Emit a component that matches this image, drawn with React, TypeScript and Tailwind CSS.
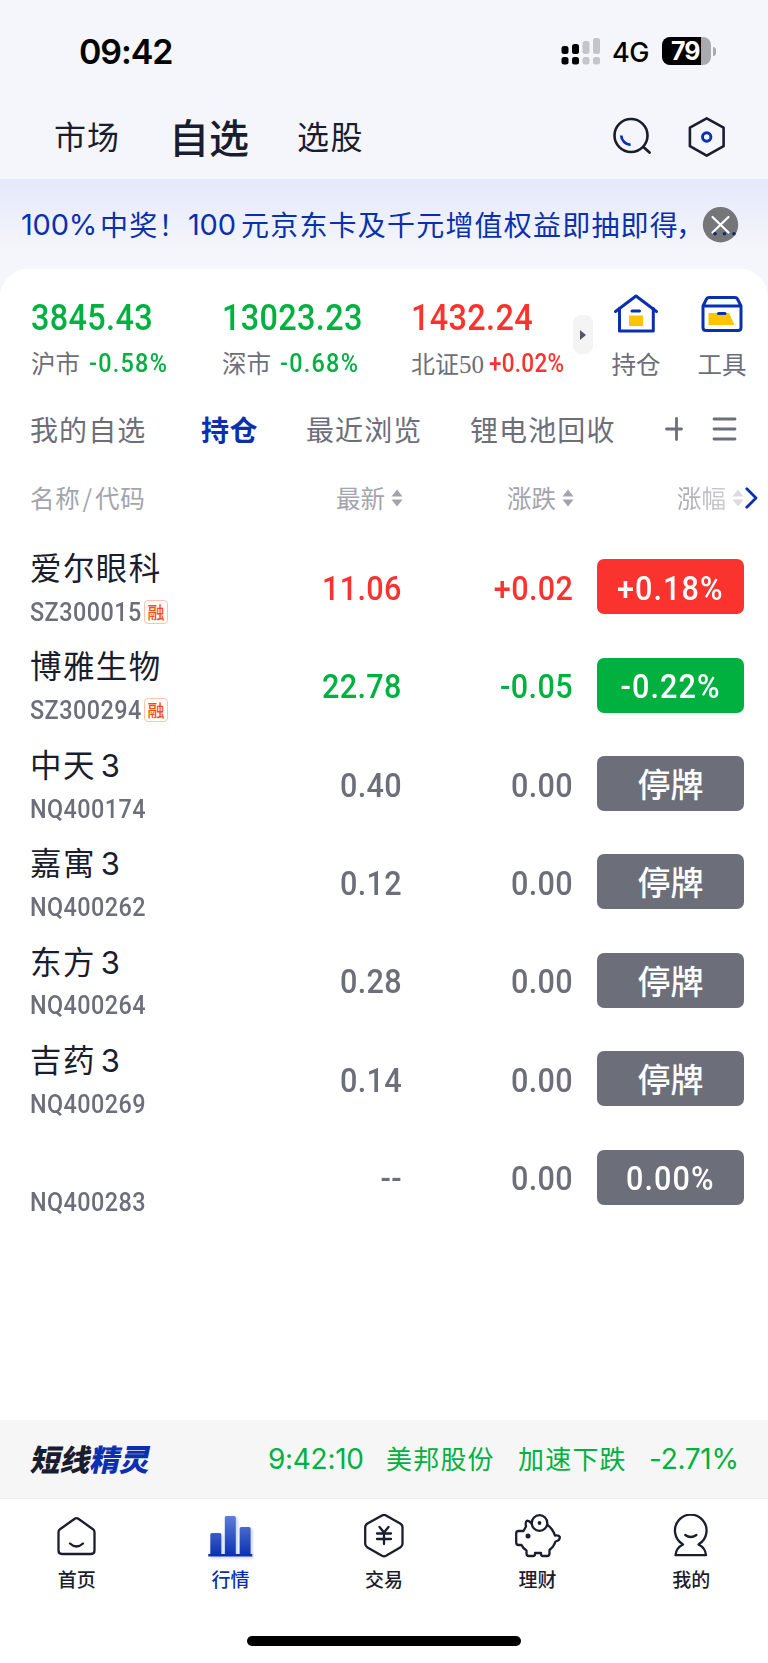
import type { ReactNode } from "react";

type Tone = "up" | "down" | "flat";

const toneText: Record<Tone, string> = {
  up: "text-[#fa332e]",
  down: "text-[#00b140]",
  flat: "text-[#6c6e7a]",
};

const toneBg: Record<Tone, string> = {
  up: "bg-[#fa332e]",
  down: "bg-[#00b140]",
  flat: "bg-[#6c6e7a]",
};

// narrow numerals used for every quote
const DIN = "inline-block scale-x-90 font-['Roboto',sans-serif] font-medium";

const stocks: {
  name: string;
  suffix?: string;
  code: string;
  margin?: boolean;
  price: string;
  change: string;
  badge: string;
  tone: Tone;
}[] = [
  { name: "爱尔眼科", code: "SZ300015", margin: true, price: "11.06", change: "+0.02", badge: "+0.18%", tone: "up" },
  { name: "博雅生物", code: "SZ300294", margin: true, price: "22.78", change: "-0.05", badge: "-0.22%", tone: "down" },
  { name: "中天", suffix: "3", code: "NQ400174", price: "0.40", change: "0.00", badge: "停牌", tone: "flat" },
  { name: "嘉寓", suffix: "3", code: "NQ400262", price: "0.12", change: "0.00", badge: "停牌", tone: "flat" },
  { name: "东方", suffix: "3", code: "NQ400264", price: "0.28", change: "0.00", badge: "停牌", tone: "flat" },
  { name: "吉药", suffix: "3", code: "NQ400269", price: "0.14", change: "0.00", badge: "停牌", tone: "flat" },
  { name: "", code: "NQ400283", price: "--", change: "0.00", badge: "0.00%", tone: "flat" },
];

function StatusBar() {
  return (
    <div className="flex h-[102px] items-center pl-[79px] text-black">
      <span className="w-[481px] pt-[1px] font-['Inter',sans-serif] text-[34px] font-semibold leading-none tracking-[-1.1px]">
        09:42
      </span>
      <svg width="40" height="28" viewBox="0 0 40 28">
        <g fill="#000">
          <rect x="1.5" y="9" width="7" height="8" rx="2.5" />
          <rect x="12" y="7" width="7" height="10" rx="2.5" />
          <rect x="1.5" y="20" width="7" height="7.5" rx="2.5" />
          <rect x="12" y="20" width="7" height="7.5" rx="2.5" />
        </g>
        <g fill="#c4c4c9">
          <rect x="22.5" y="4" width="7" height="13" rx="2.5" />
          <rect x="33" y="1" width="7" height="16" rx="2.5" />
          <rect x="22.5" y="20" width="7" height="7.5" rx="2.5" />
          <rect x="33" y="20" width="7" height="7.5" rx="2.5" />
        </g>
      </svg>
      <span className="ml-[12px] w-[50px] pt-[2px] font-['Inter',sans-serif] text-[27px] font-medium leading-none tracking-[-0.5px]">
        4G
      </span>
      <div className="flex h-[28px] w-[49px] items-center overflow-hidden rounded-[8px] bg-linear-to-r from-black from-80% to-[#a9a9ae] to-80%">
        <span className="pl-[9px] font-['Inter',sans-serif] text-[25px] font-bold leading-none tracking-[-1px] text-white">
          79
        </span>
      </div>
      <div className="ml-[2px] h-[9px] w-[3px] rounded-r-full bg-[#a9a9ae]" />
    </div>
  );
}

function TopTabs() {
  return (
    <div className="flex h-[77px] items-center pb-[8px] pl-[54px] text-[#1a1d2e]">
      <span className="w-[115px] pb-[3px] text-[32px] leading-none tracking-[1px]">市场</span>
      <span className="w-[128px] pb-[2px] text-[40px] font-medium leading-none">自选</span>
      <span className="w-[315px] pb-[3px] text-[32px] leading-none tracking-[1.5px]">选股</span>
      <svg width="40" height="40" viewBox="0 0 40 40" fill="none" strokeLinecap="round">
        <circle cx="19" cy="18.5" r="16.5" stroke="#1a1d2e" strokeWidth="2.6" />
        <path d="M32 30.5L37.5 35.5" stroke="#1a1d2e" strokeWidth="2.8" />
        <path d="M9.2 18.5A10 10 0 0 0 18.6 27.8" stroke="#0a30b0" strokeWidth="2.8" strokeLinecap="butt" />
      </svg>
      <svg className="ml-[35px]" width="40" height="40" viewBox="0 0 40 40" fill="none" strokeLinejoin="round">
        <path d="M19.7 1.3L36.6 10.6V29.2L19.7 38.6L2.9 29.2V10.6Z" stroke="#1a1d2e" strokeWidth="2.6" />
        <circle cx="19.7" cy="20" r="4.2" stroke="#0a30b0" strokeWidth="2.9" />
      </svg>
    </div>
  );
}

function Banner() {
  return (
    <div className="relative h-[117px] bg-linear-to-b from-[#e4e8fa] to-[#f5f6fb] to-60%">
      <div className="flex h-[90px] items-center whitespace-nowrap pl-[21px] text-[28px] leading-none tracking-[1.2px] text-[#0a30b0]">
        <span className="w-[79px] pt-[1px] font-['Inter',sans-serif] text-[29px] tracking-[-0.2px]">100%</span>
        <span className="w-[88px]">中奖！</span>
        <span className="w-[53px] pt-[1px] font-['Inter',sans-serif] text-[29px] tracking-[-0.2px]">100</span>
        <span>
          元京东卡及千元增值权益即抽即得<span className="-ml-[3px]">，</span>
        </span>
      </div>
      <svg className="absolute left-[702px] top-[27px]" width="38" height="38" viewBox="0 0 38 38">
        <circle cx="18.5" cy="18.7" r="17.7" fill="#757679" />
        <path d="M10.5 11L26.5 26.5M26.5 11L10.5 26.5" stroke="#fff" strokeWidth="2.2" strokeLinecap="round" />
        <g fill="#17276b">
          <circle cx="13" cy="27.8" r="1.8" />
          <circle cx="22.5" cy="27.8" r="1.8" />
          <circle cx="32" cy="27.8" r="1.8" />
        </g>
      </svg>
    </div>
  );
}

function IndexCell({
  value,
  label,
  pct,
  tone,
  className,
  pctClass,
}: {
  value: string;
  label: ReactNode;
  pct: string;
  tone: Tone;
  className: string;
  pctClass: string;
}) {
  return (
    <div className={className}>
      <div className="h-[46px] pt-[1px]">
        <span className={`origin-left text-[36px] leading-[46px] tracking-[0.4px] ${DIN} ${toneText[tone]}`}>{value}</span>
      </div>
      <div className="flex h-[46px] items-center whitespace-nowrap text-[24.5px] leading-none text-[#6c6e7a]">
        {label}
        <span className={`origin-left ${DIN} ${toneText[tone]} ${pctClass}`}>{pct}</span>
      </div>
    </div>
  );
}

function Indices() {
  return (
    <div className="flex h-[131px] pl-[31px] pt-[25px]">
      <IndexCell
        className="w-[191px]"
        value="3845.43"
        tone="down"
        pct="-0.58%"
        pctClass="text-[26px] tracking-[1.4px]"
        label={<span className="w-[58px]">沪市</span>}
      />
      <IndexCell
        className="w-[189px]"
        value="13023.23"
        tone="down"
        pct="-0.68%"
        pctClass="text-[26px] tracking-[1.4px]"
        label={<span className="w-[58px]">深市</span>}
      />
      <IndexCell
        className="w-[162px]"
        value="1432.24"
        tone="up"
        pct="+0.02%"
        pctClass="text-[25px] tracking-[0.3px]"
        label={
          <span className="w-[78px] pt-[2px] font-['Liberation_Serif','Noto_Sans_CJK_SC',serif] text-[24px]">
            北证<span className="text-[25px]">50</span>
          </span>
        }
      />
      <div className="mt-[21px] flex h-[39px] w-[20px] items-center justify-center rounded-[8px] bg-[#f4f4f5]">
        <svg width="6" height="10" viewBox="0 0 6 10">
          <path d="M0 0L6 5L0 10Z" fill="#555764" />
        </svg>
      </div>
      <div className="flex w-[86px] flex-col items-center">
        <svg className="ml-[-1px]" width="46" height="40" viewBox="0 0 46 40" fill="none" stroke="#0a30b0" strokeWidth="3" strokeLinecap="round" strokeLinejoin="round">
          <path d="M2.5 17.5L23 2L43.5 17.5" />
          <path d="M6.5 14.5V37H40.3V14.5" />
          <rect x="16" y="21.5" width="14" height="10.5" fill="#ffc400" stroke="none" />
          <path d="M19 17H26.5" />
        </svg>
        <span className="mt-[18px] text-[24.5px] leading-none">持仓</span>
      </div>
      <div className="flex w-[86px] flex-col items-center">
        <svg width="42" height="40" viewBox="0 0 42 40" fill="none" stroke="#0a30b0" strokeWidth="3" strokeLinecap="round" strokeLinejoin="round">
          <path d="M2 12L5.5 5Q6.3 3.5 8 3.5H34Q35.7 3.5 36.5 5L40 12V33.5Q40 36.5 37 36.5H5Q2 36.5 2 33.5ZM2 12H40" />
          <path d="M7.5 19H28L33.5 31H7.5Z" fill="#ffc400" stroke="none" />
          <path d="M17.5 19.5H24" />
        </svg>
        <span className="mt-[18px] text-[24.5px] leading-none">工具</span>
      </div>
    </div>
  );
}

function GroupTabs() {
  return (
    <div className="flex h-[60px] items-center pb-[2px] pl-[30px] text-[28px] leading-none tracking-[1.1px]">
      <span className="w-[171px]">我的自选</span>
      <span className="w-[105px] font-bold text-[#0a30b0] tracking-[0.5px]">持仓</span>
      <span className="w-[164px]">最近浏览</span>
      <span className="w-[195px]">锂电池回收</span>
      <svg width="18" height="24" viewBox="0 0 18 24" stroke="#6c6e7a" strokeWidth="2.8" strokeLinecap="round">
        <path d="M1.5 12H16.5M11.5 1.5V22.5" />
      </svg>
      <svg className="ml-[29px]" width="25" height="24" viewBox="0 0 25 24" stroke="#6c6e7a" strokeWidth="2.8" strokeLinecap="round">
        <path d="M2 2H23M2 12H23M2 22H23" />
      </svg>
    </div>
  );
}

function Sorter() {
  return (
    <svg className="ml-[6px]" width="12" height="18" viewBox="0 0 12 18" fill="currentColor">
      <path d="M6 0.5L11.5 7.5H0.5ZM6 17.5L11.5 10.5H0.5Z" />
    </svg>
  );
}

function TableHead() {
  return (
    <div className="flex h-[77.6px] items-center pb-[2px] pl-[30px] text-[24.5px] leading-none text-[#a3a4ad]">
      <span className="w-[200px] tracking-[0.8px]">
        名称<span className="px-[2px]">/</span>代码
      </span>
      <span className="flex w-[173px] items-center justify-end">最新<Sorter /></span>
      <span className="flex w-[171px] items-center justify-end">涨跌<Sorter /></span>
      <span className="flex w-[170px] items-center justify-end bg-linear-to-r from-[#a3a4ad] from-60% to-[#dededf] bg-clip-text text-transparent">
        涨幅<span className="text-[#dcdce0]"><Sorter /></span>
      </span>
      <svg className="ml-[1px]" width="13" height="22" viewBox="0 0 13 22" fill="none" stroke="#0a30b0" strokeWidth="2.8" strokeLinecap="round" strokeLinejoin="round">
        <path d="M1.8 1.8L11 11L1.8 20.2" />
      </svg>
    </div>
  );
}

function StockRow({ stock }: { stock: (typeof stocks)[number] }) {
  const num = `origin-right pt-[2px] text-[34px] leading-none tracking-[0.4px] ${DIN} ${toneText[stock.tone]}`;

  return (
    <div className="flex h-[98.4px] items-center pl-[30px]">
      <div className="w-[200px]">
        <div className="flex h-[44px] items-center text-[31.5px] leading-none tracking-[1.4px] text-[#1a1d2e]">
          {stock.name}
          {stock.suffix && <span className="ml-[5px] pt-[4px] font-['Inter',sans-serif] text-[31px]">{stock.suffix}</span>}
        </div>
        <div className="flex h-[40px] items-center pt-[4px]">
          <span className={`w-[110px] origin-left pt-[2px] text-[26px] leading-none tracking-[0.5px] ${DIN}`}>{stock.code}</span>
          {stock.margin && (
            <span className="ml-[4px] mt-[2px] flex size-[24px] items-center justify-center rounded-[4px] border-[1.5px] border-[#ffc3b0] pb-[1px] text-[17px] font-medium leading-none text-[#ff4b16]">
              融
            </span>
          )}
        </div>
      </div>
      <div className="w-[172px] text-right">
        <span className={num}>{stock.price}</span>
      </div>
      <div className="w-[171px] text-right">
        <span className={num}>{stock.change}</span>
      </div>
      <div className={`ml-[24px] flex h-[55px] w-[147px] items-center justify-center rounded-[7px] text-white ${toneBg[stock.tone]}`}>
        {stock.badge === "停牌" ? (
          <span className="text-[33px] font-medium leading-none">{stock.badge}</span>
        ) : (
          <span className={`pt-[2px] text-[34px] leading-none tracking-[1.2px] ${DIN}`}>{stock.badge}</span>
        )}
      </div>
    </div>
  );
}

function Ticker() {
  return (
    <div className="flex h-[79px] items-center whitespace-nowrap border-b border-[#efeff0] bg-[#f6f6f6] pb-[1px] pl-[30px] text-[26px] leading-none tracking-[1.2px] text-[#00b140]">
      <span className="w-[238px] -skew-x-12 pb-[2px] pl-[2px] text-[30px] font-black tracking-[-0.2px] text-[#1a1d2e]">
        短线<span className="text-[#0a30b0]">精灵</span>
      </span>
      <span className="w-[118px] pt-[1px] font-['Inter',sans-serif] text-[28px] tracking-[-0.3px]">9:42:10</span>
      <span className="w-[132px] pb-[1px]">美邦股份</span>
      <span className="w-[131px] pb-[1px]">加速下跌</span>
      <span className="pt-[1px] font-['Inter',sans-serif] text-[28px] tracking-[-0.3px]">-2.71%</span>
    </div>
  );
}

function NavIcon({ children }: { children: ReactNode }) {
  return (
    <svg width="48" height="48" viewBox="0 0 48 48" fill="none" stroke="#1a1d2e" strokeWidth="2.3" strokeLinecap="round" strokeLinejoin="round">
      {children}
    </svg>
  );
}

const navItems: { label: string; active?: boolean; icon: ReactNode }[] = [
  {
    label: "首页",
    icon: (
      <>
        <path d="M21.7 4.8Q23.5 3.5 25.3 4.8L40 15.2Q41.5 16.4 41.5 18.2V36.5Q41.5 40 38 40H9Q5.5 40 5.5 36.5V18.2Q5.5 16.4 7 15.2Z" />
        <path d="M17 29.5Q23.5 35.5 30 29.5" />
      </>
    ),
  },
  {
    label: "行情",
    active: true,
    icon: (
      <>
        <defs>
          <linearGradient id="bars" gradientUnits="userSpaceOnUse" x1="0" y1="2" x2="0" y2="42">
            <stop offset="0" stopColor="#5f7ddb" />
            <stop offset="1" stopColor="#0a30b0" />
          </linearGradient>
          <filter id="glow" x="-20%" y="-20%" width="150%" height="150%">
            <feDropShadow dx="2" dy="1.5" stdDeviation="1.5" floodColor="#5f7ddb" floodOpacity="0.35" />
          </filter>
        </defs>
        <path
          d="M4.3 20.5Q4.3 19 5.8 19H13.8Q15.3 19 15.3 20.5V40H18.8V3.5Q18.8 2 20.3 2H28.3Q29.8 2 29.8 3.5V40H33.6V14.5Q33.6 13 35.1 13H43.1Q44.6 13 44.6 14.5V40H46.3V42.5H2.3V40H4.3Z"
          fill="url(#bars)"
          stroke="none"
          filter="url(#glow)"
        />
      </>
    ),
  },
  {
    label: "交易",
    icon: (
      <>
        <path d="M22 1.4Q24 0.4 26 1.4L40.2 9.6Q42.5 11 42.5 13.3V29.8Q42.5 32.2 40.2 33.5L26 41.8Q24 42.8 22 41.8L7.5 33.5Q5.2 32.2 5.2 29.8V13.3Q5.2 11 7.5 9.6Z" />
        <path d="M19.5 13L24 18.5L28.5 13M24 18.5V30M17 19.5H31M17 25H31" />
      </>
    ),
  },
  {
    label: "理财",
    icon: (
      <>
        <circle cx="25.5" cy="9" r="7.8" />
        <circle cx="25.5" cy="9" r="1.9" fill="#1a1d2e" stroke="none" />
        <circle cx="14" cy="22" r="2.5" fill="#1a1d2e" stroke="none" />
        <path d="M17.5 9.5Q15 6.5 12.8 6.8Q11.2 7.5 12 12.500L9.5 17H4.5Q2.2 17 2.2 19.5V28.5Q2.2 31 4.5 31H7.500Q9 34.5 12.5 36.5V39.5Q12.5 42 15 42H19Q21 42 21 40V39H27V40Q27 42 29 42H33Q35.5 42 35.5 39.5V36Q40 32.5 41.5 27.5Q46 26.5 45.800 23Q45 21 41 21.500Q38.5 14.5 33.5 11" />
      </>
    ),
  },
  {
    label: "我的",
    icon: (
      <>
        <path d="M15.5 30A15.8 15.8 0 1 1 32 30L31.5 30.5Q38.5 34 39 41.2H8.5Q9 34 16 30.5Z" />
        <path d="M18.2 21Q23.8 25 29.4 21" />
      </>
    ),
  },
];

function BottomNav() {
  return (
    <nav className="grid h-[137px] grid-cols-5 pt-[15px]">
      {navItems.map((item) => (
        <div key={item.label} className="flex flex-col items-center">
          <NavIcon>{item.icon}</NavIcon>
          <span className={`mt-[7px] text-[19px] font-medium leading-none ${item.active ? "text-[#0a30b0]" : "text-[#1a1d2e]"}`}>
            {item.label}
          </span>
        </div>
      ))}
    </nav>
  );
}

export default function App() {
  return (
    <div className="flex h-[1663px] w-[768px] flex-col overflow-hidden bg-[#f5f6fb] font-['Noto_Sans_CJK_SC',sans-serif] text-[#6c6e7a]">
      <StatusBar />
      <TopTabs />
      <Banner />
      <main className="relative -mt-[27px] flex flex-1 flex-col rounded-t-[28px] bg-white">
        <Indices />
        <GroupTabs />
        <TableHead />
        <div className="flex-1">
          {stocks.map((stock) => (
            <StockRow key={stock.code} stock={stock} />
          ))}
        </div>
        <Ticker />
        <BottomNav />
        <div className="mx-auto mb-[17px] h-[10px] w-[274px] rounded-full bg-black" />
      </main>
    </div>
  );
}
